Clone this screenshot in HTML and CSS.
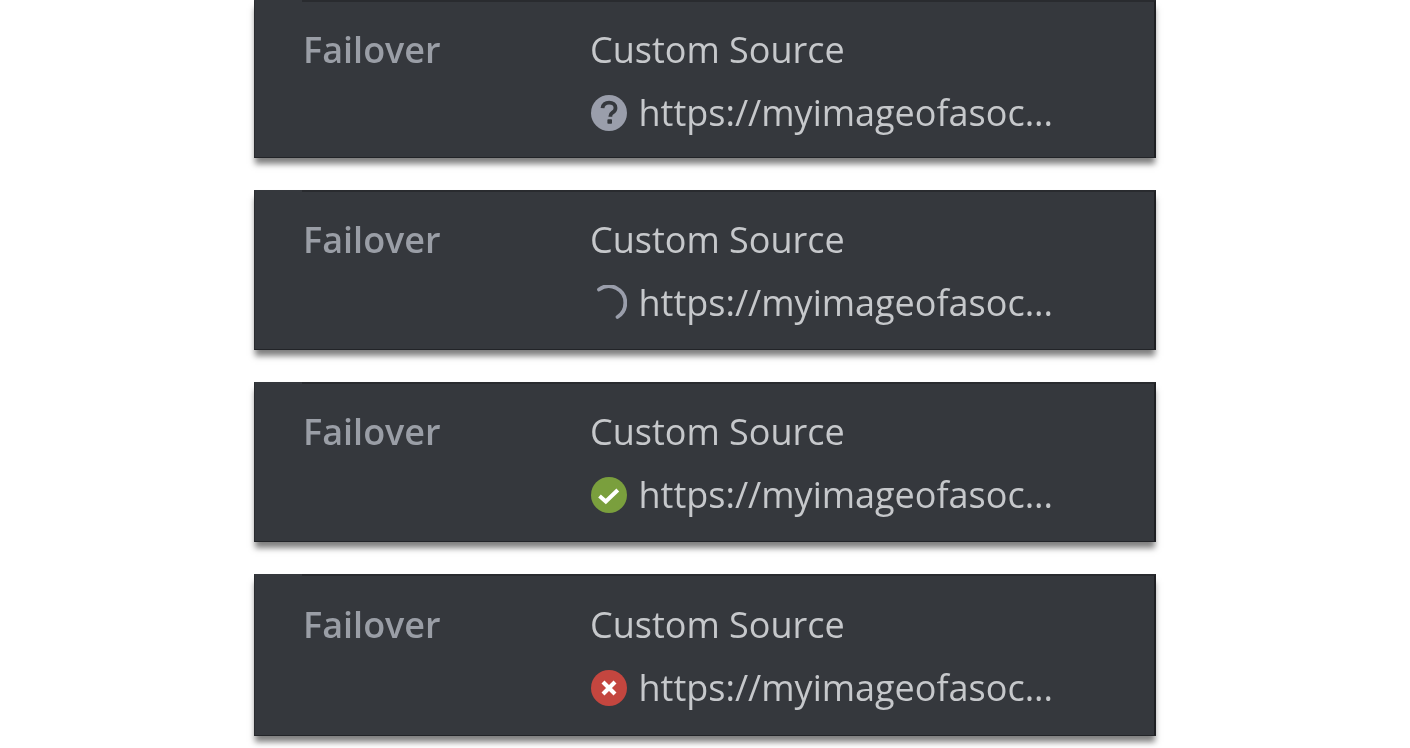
FILE: index.html
```html
<!DOCTYPE html>
<html lang="en">
  <head>
    <meta charset="UTF-8" />
    <title>Failover source states</title>
    <link rel="stylesheet" href="styles.css">
  </head>
  <body>
    <div class="stack">
      <div class="card card-short">
        <div class="label">Failover</div>
        <div class="source">
          <div class="source-title">Custom Source</div>
          <div class="source-url">
            <svg class="icon" viewBox="0 0 36 36">
              <circle cx="18" cy="18" r="18" fill="#9a9eab" />
              <path d="M11.500 13.200c.3-3.500 3-5.600 6.600-5.600 3.700 0 6.400 2.100 6.400 5.300 0 2.400-1.300 3.600-3 4.700-1.500 1-2.100 1.700-2.100 3.300v.8" fill="none" stroke="#35383d" stroke-width="3.800" />
              <rect x="16.400" y="24.200" width="4.600" height="4.600" rx="0.800" fill="#35383d" />
            </svg>
            <span>https://myimageofasoc...</span>
          </div>
        </div>
      </div>

      <div class="card">
        <div class="label">Failover</div>
        <div class="source">
          <div class="source-title">Custom Source</div>
          <div class="source-url">
            <svg class="icon" viewBox="0 0 36 36">
              <path d="M8 4.500A16.500 16.500 0 0 1 34.300 18 16.500 16.500 0 0 1 26.500 32" fill="none" stroke="#9a9eab" stroke-width="3.800" stroke-linecap="round" />
            </svg>
            <span>https://myimageofasoc...</span>
          </div>
        </div>
      </div>

      <div class="card">
        <div class="label">Failover</div>
        <div class="source">
          <div class="source-title">Custom Source</div>
          <div class="source-url">
            <svg class="icon" viewBox="0 0 36 36">
              <circle cx="18" cy="18" r="18" fill="#7a9f3d" />
              <path d="M8.500 19l6.300 5.500 12-11.500" fill="none" stroke="#fff" stroke-width="4" />
            </svg>
            <span>https://myimageofasoc...</span>
          </div>
        </div>
      </div>

      <div class="card card-tall">
        <div class="label">Failover</div>
        <div class="source">
          <div class="source-title">Custom Source</div>
          <div class="source-url">
            <svg class="icon" viewBox="0 0 36 36">
              <circle cx="18" cy="18" r="18" fill="#c4463f" />
              <path d="M12 12l12 12M24 12l-12 12" fill="none" stroke="#fff" stroke-width="4.200" />
            </svg>
            <span>https://myimageofasoc...</span>
          </div>
        </div>
      </div>
    </div>
  </body>
</html>
```

FILE: styles.css
```css
* {
  margin: 0;
  padding: 0;
  box-sizing: border-box;
}

body {
  font-family: "Open Sans", "Noto Sans", sans-serif;
  background-color: #ffffff;
  height: 748px;
  overflow: hidden;
}

.stack {
  width: 902px;
  margin-left: 254px;
  display: flex;
  flex-direction: column;
  gap: 32px;
  filter: blur(0.4px);
}

.card {
  height: 160px;
  padding: 27px 0 0 48px;
  display: flex;
  background-color: #35383d;
  background-image: linear-gradient(#292b2f, #292b2f);
  background-repeat: no-repeat;
  background-position: 48px 0;
  background-origin: border-box;
  background-size: 100% 2px;
  border-top: 2px solid #303338;
  border-top-color: transparent;
  border-left: 1px solid #2a2c30;
  border-right: 2px solid #1f2023;
  border-bottom: 1px solid #222428;
  box-shadow: 0 7px 6px -1px rgba(0, 0, 0, 0.5);
}

.card-short {
  height: 158px;
}

.card-tall {
  height: 162px;
  padding-top: 28px;
}

.label {
  width: 288px;
  font-size: 36px;
  font-weight: 600;
  line-height: 42px;
  color: #9a9ea6;
}

.source-title {
  margin-left: -1px;
  font-size: 36px;
  line-height: 42px;
  color: #c6c8cb;
}

.source-url {
  margin-top: 21px;
  display: flex;
  align-items: center;
  gap: 11.5px;
  font-size: 36px;
  line-height: 42px;
  color: #c6c8cb;
}

.icon {
  width: 36px;
  height: 36px;
  flex-shrink: 0;
}
```
